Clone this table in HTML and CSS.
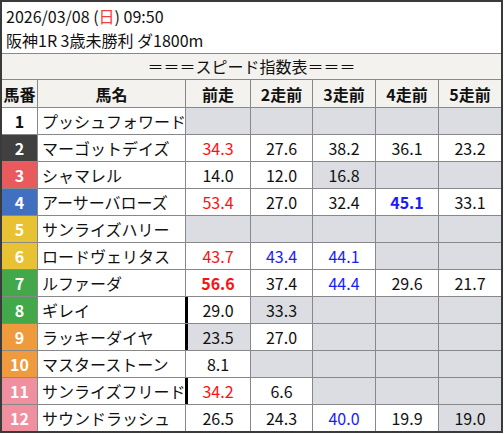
FILE: index.html
```html
<!DOCTYPE html>
<html lang="ja">
<head>
<meta charset="utf-8">
<link rel="stylesheet" href="styles.css">
</head>
<body>
<div class="card">
  <div class="info">
    <div>2026/03/08 (<span class="sun">日</span>) 09:50</div>
    <div>阪神1R 3歳未勝利 ダ1800m</div>
  </div>
  <div class="title">＝＝＝スピード指数表＝＝＝</div>
  <div class="grid">
    <div class="h">馬番</div><div class="h">馬名</div><div class="h">前走</div><div class="h">2走前</div><div class="h">3走前</div><div class="h">4走前</div><div class="h">5走前</div>

    <div class="g g1">1</div><div class="nm">プッシュフォワード</div><div class="e"></div><div class="e"></div><div class="e"></div><div class="e"></div><div class="e"></div>

    <div class="g g2">2</div><div class="nm">マーゴットデイズ</div><div class="v red">34.3</div><div class="v">27.6</div><div class="v">38.2</div><div class="v">36.1</div><div class="v">23.2</div>

    <div class="g g3">3</div><div class="nm">シャマレル</div><div class="v">14.0</div><div class="v">12.0</div><div class="v e">16.8</div><div class="e"></div><div class="e"></div>

    <div class="g g4">4</div><div class="nm">アーサーバローズ</div><div class="v red">53.4</div><div class="v">27.0</div><div class="v">32.4</div><div class="v blue b">45.1</div><div class="v">33.1</div>

    <div class="g g5">5</div><div class="nm">サンライズハリー</div><div class="e"></div><div class="e"></div><div class="e"></div><div class="e"></div><div class="e"></div>

    <div class="g g5">6</div><div class="nm">ロードヴェリタス</div><div class="v red">43.7</div><div class="v blue">43.4</div><div class="v blue">44.1</div><div class="e"></div><div class="e"></div>

    <div class="g g7">7</div><div class="nm">ルファーダ</div><div class="v red b">56.6</div><div class="v">37.4</div><div class="v blue">44.4</div><div class="v">29.6</div><div class="v">21.7</div>

    <div class="g g7">8</div><div class="nm">ギレイ</div><div class="v mark">29.0</div><div class="v e">33.3</div><div class="e"></div><div class="e"></div><div class="e"></div>

    <div class="g g9">9</div><div class="nm">ラッキーダイヤ</div><div class="v e mark">23.5</div><div class="v">27.0</div><div class="e"></div><div class="e"></div><div class="e"></div>

    <div class="g g9">10</div><div class="nm">マスターストーン</div><div class="v">8.1</div><div class="e"></div><div class="e"></div><div class="e"></div><div class="e"></div>

    <div class="g g11">11</div><div class="nm">サンライズフリード</div><div class="v red mark">34.2</div><div class="v">6.6</div><div class="e"></div><div class="e"></div><div class="e"></div>

    <div class="g g11">12</div><div class="nm">サウンドラッシュ</div><div class="v">26.5</div><div class="v">24.3</div><div class="v blue">40.0</div><div class="v">19.9</div><div class="v e">19.0</div>
  </div>
</div>
</body>
</html>
```

FILE: styles.css
```css
html, body {
  margin: 0;
  padding: 0;
  background: #fff;
}

body {
  font-family: "Noto Sans CJK JP", "Noto Sans", sans-serif;
  font-size: 16px;
  color: #111;
}

.card {
  width: 503px;
  height: 433px;
  box-sizing: border-box;
  border: 2px solid #3a3a3a;
  display: flex;
  flex-direction: column;
}

.info {
  height: 51px;
  padding: 0 4px;
  border-bottom: 1px solid #888;
  display: flex;
  flex-direction: column;
  justify-content: center;
  line-height: 24px;
  background: #fff;
}

.sun {
  color: #f04040;
}

.title {
  height: 25px;
  line-height: 25px;
  text-align: center;
  background: #f3f2ee;
  border-bottom: 1px solid #888;
}

.grid {
  display: grid;
  grid-template-columns: 35px 147px 64px 61px 62px 62px 62px;
  grid-template-rows: 27px repeat(12, 26px);
  gap: 1px;
  background: #888;
}

.grid > div {
  background: #fff;
  display: flex;
  align-items: center;
  justify-content: center;
  line-height: 1;
  white-space: nowrap;
}

.grid > .h {
  background: #f3f2ee;
  font-weight: bold;
}

.grid > .nm {
  justify-content: flex-start;
  padding-left: 4px;
}

.grid > .e {
  background: #dcdde2;
}

.g {
  font-weight: bold;
  color: #fff;
}

.grid > .g1 { background: #fff; color: #111; }
.grid > .g2 { background: #404040; }
.grid > .g3 { background: #e85a5c; }
.grid > .g4 { background: #4270c0; }
.grid > .g5 { background: #e8c232; }
.grid > .g7 { background: #42a84a; }
.grid > .g9 { background: #f09a3e; }
.grid > .g11 { background: #f0909f; }

.red { color: #ff1010; }
.blue { color: #1a1aff; }
.b { font-weight: bold; }

.mark {
  box-shadow: -1px 0 0 #000, inset 2px 0 0 #000;
}
```
